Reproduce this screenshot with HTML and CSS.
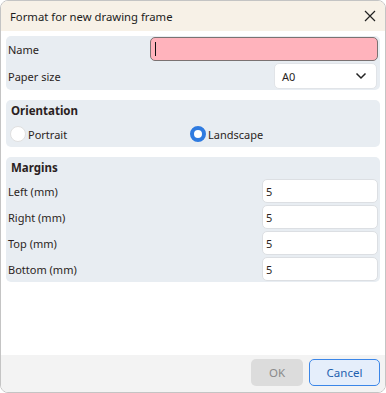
FILE: index.html
```html
<!DOCTYPE html>
<html lang="en">
<head>
  <meta charset="UTF-8">
  <title>Format for new drawing frame</title>
  <link rel="stylesheet" href="styles.css">
</head>
<body>
  <div class="dialog">
    <div class="titlebar">
      <span class="title">Format for new drawing frame</span>
      <svg class="close" width="12" height="12" viewBox="0 0 12 12">
        <path d="M1 1 L11 11 M11 1 L1 11" stroke="#222" stroke-width="1.2" fill="none"/>
      </svg>
    </div>
    <div class="content">
      <div class="group top">
        <div class="row">
          <label for="name">Name</label>
          <div class="input name"><span class="caret"></span></div>
        </div>
        <div class="row">
          <label>Paper size</label>
          <div class="select">
            <span>A0</span>
            <svg width="12" height="8" viewBox="0 0 12 8">
              <path d="M1.5 1.5 L6 6 L10.5 1.5" stroke="#222" stroke-width="1.5" fill="none"/>
            </svg>
          </div>
        </div>
      </div>
      <div class="group orient">
        <div class="heading">Orientation</div>
        <div class="radios">
          <div class="radio"><span class="dot"></span>Portrait</div>
          <div class="radio"><span class="dot on"></span>Landscape</div>
        </div>
      </div>
      <div class="group margins">
        <div class="heading">Margins</div>
        <div class="row"><label>Left (mm)</label><div class="input num">5</div></div>
        <div class="row"><label>Right (mm)</label><div class="input num">5</div></div>
        <div class="row"><label>Top (mm)</label><div class="input num">5</div></div>
        <div class="row"><label>Bottom (mm)</label><div class="input num">5</div></div>
      </div>
    </div>
    <div class="footer">
      <button class="ok">OK</button>
      <button class="cancel">Cancel</button>
    </div>
  </div>
</body>
</html>
```

FILE: styles.css
```css
* {
  margin: 0;
  padding: 0;
  box-sizing: border-box;
}

body {
  width: 386px;
  height: 393px;
  background-color: #ffffff;
  font-family: "Noto Sans", "Open Sans", sans-serif;
  font-size: 11px;
  color: #2b1f22;
}

.dialog {
  width: 386px;
  height: 393px;
  border: 1px solid #c4c4c4;
  border-radius: 8px;
  overflow: hidden;
  display: flex;
  flex-direction: column;
  background-color: #ffffff;
}

.titlebar {
  height: 30px;
  background-color: #f7f1e7;
  display: flex;
  align-items: center;
  justify-content: space-between;
  padding-left: 9px;
  padding-right: 9px;
  flex-shrink: 0;
}

.title {
  font-size: 11.3px;
  color: #1c1c1c;
}

.content {
  flex: 1;
  padding: 5px 5px 0 5px;
  display: flex;
  flex-direction: column;
  gap: 10px;
}

.group {
  background-color: #e8edf2;
  border-radius: 5px;
  padding: 1px 2px 1px 2px;
  display: flex;
  flex-direction: column;
  gap: 2px;
}

.row {
  display: flex;
  align-items: center;
  justify-content: space-between;
}

.input {
  height: 24px;
  border-radius: 5px;
  background-color: #ffffff;
  border: 1px solid #dcdfe3;
  display: flex;
  align-items: center;
  padding-left: 4px;
}

.input.name {
  width: 228px;
  background-color: #ffb3bc;
  border-color: #7a7272;
}

.caret {
  width: 1px;
  height: 14px;
  background-color: #111;
}

.select {
  width: 103px;
  height: 26px;
  margin-right: 1px;
  background-color: #ffffff;
  border: 1px solid #e1e4e8;
  border-radius: 5px;
  display: flex;
  align-items: center;
  justify-content: space-between;
  padding-left: 7px;
  padding-right: 9px;
}

.orient {
  padding-top: 2px;
  padding-bottom: 4px;
  gap: 6px;
  height: 47px;
}

.heading {
  font-weight: bold;
  font-size: 11.5px;
  padding-left: 3px;
  height: 18px;
  line-height: 18px;
}

.radios {
  display: grid;
  grid-template-columns: 180px 1fr;
}

.radio {
  display: flex;
  align-items: center;
  gap: 2px;
  padding-left: 2px;
}

.dot {
  width: 16px;
  height: 16px;
  border-radius: 50%;
  background-color: #ffffff;
  border: 1px solid #e0e0e0;
}

.dot.on {
  border: 4.5px solid #2f7be0;
}

.margins {
  padding-top: 2px;
  padding-bottom: 1px;
}

.input.num {
  width: 116px;
  padding-left: 3px;
}

.footer {
  height: 37px;
  background-color: #f3f3f3;
  display: flex;
  justify-content: flex-end;
  align-items: flex-start;
  gap: 6px;
  padding-top: 4px;
  padding-right: 5px;
  flex-shrink: 0;
}

button {
  height: 27px;
  border-radius: 5px;
  font-family: inherit;
  font-size: 11.5px;
}

.ok {
  width: 52px;
  background-color: #dcdcdc;
  border: none;
  color: #8a8a8a;
}

.cancel {
  width: 71px;
  background-color: #e5eefb;
  border: 1px solid #3b86e8;
  color: #1d5fae;
}
```
